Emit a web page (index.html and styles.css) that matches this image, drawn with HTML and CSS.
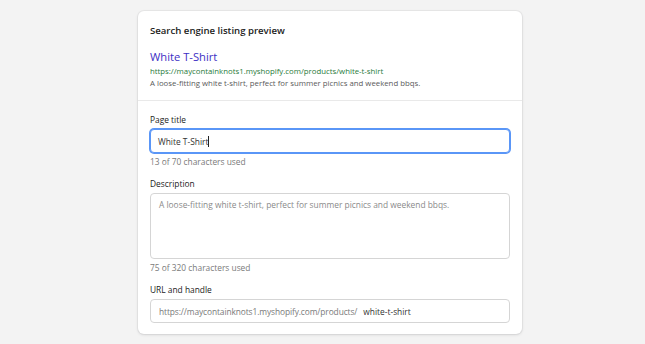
FILE: index.html
```html
<!DOCTYPE html>
<html lang="en">
<head>
<meta charset="utf-8">
<title>Search engine listing preview</title>
<link rel="stylesheet" href="styles.css">
</head>
<body>
<main class="page">
  <section class="card">
    <div class="preview">
      <h2 class="heading">Search engine listing preview</h2>
      <div class="serp">
        <div class="serp-title">White T-Shirt</div>
        <div class="serp-url">https://maycontainknots1.myshopify.com/products/white-t-shirt</div>
        <div class="serp-desc">A loose-fitting white t-shirt, perfect for summer picnics and weekend bbqs.</div>
      </div>
    </div>
    <div class="form">
      <div class="field">
        <label class="label">Page title</label>
        <div class="input focused"><span class="value">White T-Shirt</span><span class="caret"></span></div>
        <div class="help">13 of 70 characters used</div>
      </div>
      <div class="field">
        <label class="label">Description</label>
        <div class="input textarea"><span class="placeholder">A loose-fitting white t-shirt, perfect for summer picnics and weekend bbqs.</span></div>
        <div class="help">75 of 320 characters used</div>
      </div>
      <div class="field">
        <label class="label">URL and handle</label>
        <div class="input"><span class="prefix">https://maycontainknots1.myshopify.com/products/</span><span class="value">white-t-shirt</span></div>
      </div>
    </div>
  </section>
</main>
</body>
</html>
```

FILE: styles.css
```css
* { box-sizing: border-box; }
html, body { margin: 0; padding: 0; }
body {
  background: #f3f3f3;
  font-family: "Open Sans", "Noto Sans", Arial, sans-serif;
  font-size: 8.4px;
  color: #333;
  width: 645px;
  height: 344px;
  overflow: hidden;
}
.page {
  padding: 11px 0 0 138px;
}
.card {
  width: 384px;
  height: 323px;
  background: #fff;
  border-radius: 6px;
  box-shadow: 0 0 0 1px rgba(63,63,68,0.05), 0 1px 3px rgba(63,63,68,0.15);
  overflow: hidden;
}
.preview {
  padding: 13px 12px 11px;
  border-bottom: 1px solid #e9e9e9;
}
.heading {
  margin: 0;
  font-size: 9.6px;
  line-height: 14px;
  font-weight: 600;
  color: #222;
}
.serp { margin-top: 11px; }
.serp-title {
  font-size: 11.2px;
  line-height: 16px;
  color: #3d2fc4;
}
.serp-url {
  font-size: 7.8px;
  line-height: 12px;
  color: #1f7a3a;
}
.serp-desc {
  font-size: 7.8px;
  line-height: 12px;
  color: #5a5a5a;
}
.form {
  padding: 13px 12px 12px;
  display: flex;
  flex-direction: column;
  gap: 10px;
}
.field {
  display: flex;
  flex-direction: column;
}
.label {
  line-height: 12px;
  color: #222;
  margin-bottom: 3px;
}
.input {
  height: 24px;
  border: 1px solid #d5d5d5;
  border-radius: 4px;
  padding: 0 8px;
  display: flex;
  align-items: center;
  background: #fff;
  white-space: nowrap;
}
.input.focused {
  border-color: #5a96f7;
  box-shadow: 0 0 0 1px #5a96f7;
  padding-left: 7px;
}
.value { color: #333; }
.caret {
  display: inline-block;
  width: 1px;
  height: 11px;
  background: #222;
}
.textarea {
  height: 66px;
  align-items: flex-start;
  padding-top: 5px;
}
.placeholder { color: #8a8a8a; line-height: 12px; }
.prefix { color: #7a7a7a; margin-right: 6px; letter-spacing: -0.1px; }
.help {
  margin-top: 3px;
  line-height: 12px;
  color: #7a7a7a;
}
```
